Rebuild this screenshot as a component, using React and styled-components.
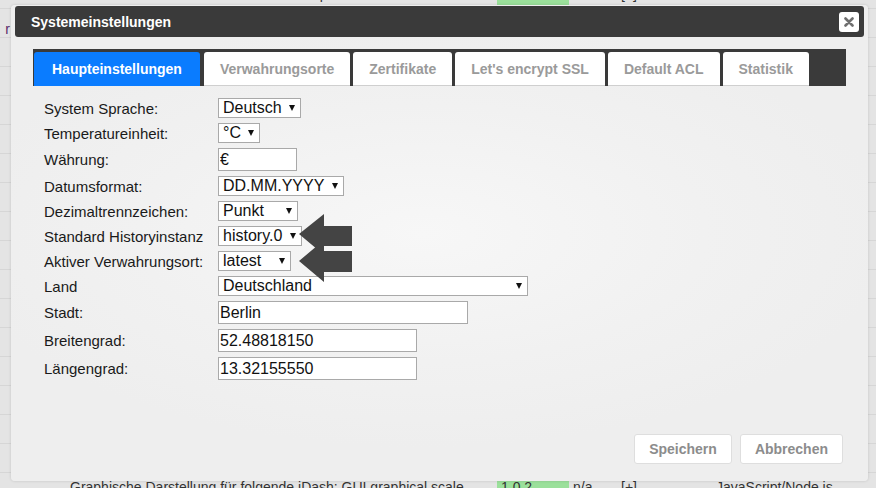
import React from "react";
import styled, { createGlobalStyle } from "styled-components";

const GlobalStyle = createGlobalStyle`
  html, body {
    margin: 0;
    padding: 0;
  }
  body {
    font-family: "Liberation Sans", Arial, sans-serif;
    background: #e4e4e4;
  }
`;

const tabs = [
  "Haupteinstellungen",
  "Verwahrungsorte",
  "Zertifikate",
  "Let's encrypt SSL",
  "Default ACL",
  "Statistik",
];

const fields = [
  { label: "System Sprache:", type: "select", value: "Deutsch", width: 83 },
  { label: "Temperatureinheit:", type: "select", value: "°C", width: 42 },
  { label: "Währung:", type: "input", value: "€", width: 79 },
  { label: "Datumsformat:", type: "select", value: "DD.MM.YYYY", width: 126 },
  { label: "Dezimaltrennzeichen:", type: "select", value: "Punkt", width: 80 },
  { label: "Standard Historyinstanz", type: "select", value: "history.0", width: 84 },
  { label: "Aktiver Verwahrungsort:", type: "select", value: "latest", width: 73 },
  { label: "Land", type: "select", value: "Deutschland", width: 310 },
  { label: "Stadt:", type: "input", value: "Berlin", width: 250 },
  { label: "Breitengrad:", type: "input", value: "52.48818150", width: 199 },
  { label: "Längengrad:", type: "input", value: "13.32155550", width: 199 },
];

// rows of the adapter page lying behind the dialog
const backRows = Array.from({ length: 18 }, (_, i) => i);
const edgeRow = (i) => i === 0 || i === 17;

function App() {
  return (
    <Page>
      <GlobalStyle />
      <BackTable>
        {backRows.map((i) => (
          <BackRow key={i}>
            <BackCell $align="right" $color="#5b2a6b">
              {i === 1 ? "r" : ""}
            </BackCell>
            <BackCell />
            <BackCell>
              {i === 0
                ? "Datenbank oder iobroker Server mit Adapter-Instanzen"
                : i === 17
                ? "Graphische Darstellung für folgende iDash: GUI graphical scale"
                : ""}
            </BackCell>
            <BackCell $green={edgeRow(i)}>{edgeRow(i) ? "1.0.2" : ""}</BackCell>
            <BackCell>{edgeRow(i) ? "n/a" : ""}</BackCell>
            <BackCell>{edgeRow(i) ? "[+]" : ""}</BackCell>
            <BackCell />
            <BackCell $color={i === 0 ? "#8b1b2b" : "#333"}>
              {i === 0 ? "Mod-Datenbank.io" : i === 17 ? "JavaScript/Node.js" : ""}
            </BackCell>
          </BackRow>
        ))}
      </BackTable>

      <Dialog>
        <TitleBar>
          <Title>Systemeinstellungen</Title>
          <CloseButton aria-label="Schließen">
            <svg width="10" height="10" viewBox="0 0 10 10">
              <path
                d="M1.5 1.5 L8.5 8.5 M8.5 1.5 L1.5 8.5"
                stroke="#6f6f6f"
                strokeWidth="2.6"
                strokeLinecap="round"
              />
            </svg>
          </CloseButton>
        </TitleBar>

        <Content>
          <TabBar>
            {tabs.map((t, i) => (
              <Tab key={t} $active={i === 0}>
                {t}
              </Tab>
            ))}
          </TabBar>

          <Form>
            {fields.map((f) => (
              <Row key={f.label}>
                <Label>{f.label}</Label>
                {f.type === "select" ? (
                  <SelectWrap $width={f.width}>
                    <Select defaultValue={f.value}>
                      <option>{f.value}</option>
                    </Select>
                  </SelectWrap>
                ) : (
                  <TextInput $width={f.width} defaultValue={f.value} />
                )}
              </Row>
            ))}

            <Arrows width="56" height="74" viewBox="0 0 56 74">
              <polygon
                points="1,22 26,2 26,14 54,14 54,34 26,34 26,43"
                fill="#444"
              />
              <polygon
                points="1,49 26,28 26,39 54,39 54,60 26,60 26,70"
                fill="#444"
              />
            </Arrows>
          </Form>
        </Content>

        <Footer>
          <FooterButton>Speichern</FooterButton>
          <FooterButton>Abbrechen</FooterButton>
        </Footer>
      </Dialog>
    </Page>
  );
}

const Page = styled.div`
  position: relative;
  width: 876px;
  height: 488px;
  overflow: hidden;
  background: #e4e4e4;
  font-family: "Liberation Sans", Arial, sans-serif;
`;

const BackTable = styled.div`
  display: flex;
  flex-direction: column;
  margin-top: -20px;
`;

const BackRow = styled.div`
  display: grid;
  grid-template-columns: 11px 55px 431px 72px 48px 40px 55px 1fr;
  height: 28px;
  align-items: center;
  border-bottom: 1px solid #d6d6d6;
  font-size: 14px;
  color: #333;
`;

const BackCell = styled.div`
  height: 100%;
  display: flex;
  align-items: ${(p) => (p.$align === "right" ? "flex-end" : "center")};
  justify-content: ${(p) => (p.$align === "right" ? "flex-end" : "flex-start")};
  padding: 0 ${(p) => (p.$align === "right" ? "1px" : "4px")};
  white-space: nowrap;
  overflow: hidden;
  color: ${(p) => p.$color || "#333"};
  background: ${(p) => (p.$green ? "#9be09b" : "transparent")};
`;

const Dialog = styled.div`
  position: absolute;
  left: 11px;
  top: 5px;
  width: 857px;
  height: 476px;
  box-sizing: border-box;
  padding: 1px 4px 0;
  display: flex;
  flex-direction: column;
  border-radius: 4px;
  background: radial-gradient(
    ellipse 55% 45% at 48% 48%,
    #f7f7f7 0%,
    #f1f1f1 60%,
    #eeeeee 100%
  );
  box-shadow: 0 0 3px rgba(0, 0, 0, 0.15);
`;

const TitleBar = styled.div`
  height: 31px;
  display: flex;
  align-items: center;
  justify-content: space-between;
  padding: 0 5px 0 16px;
  background: #3a3a3a;
  border-radius: 3px;
`;

const Title = styled.span`
  color: #fff;
  font-size: 14px;
  font-weight: bold;
`;

const CloseButton = styled.button`
  width: 20px;
  height: 20px;
  padding: 0;
  border: none;
  border-radius: 3px;
  background: #fff;
  display: flex;
  align-items: center;
  justify-content: center;
  cursor: pointer;
`;

const Content = styled.div`
  padding: 12px 18px 0;
`;

const TabBar = styled.div`
  height: 37px;
  box-sizing: border-box;
  padding: 3px 0 0 1px;
  display: flex;
  gap: 3px;
  background: #3a3a3a;
`;

const Tab = styled.div`
  height: 34px;
  box-sizing: border-box;
  padding: 0 ${(p) => (p.$active ? "18px" : "16px")};
  margin-right: ${(p) => (p.$active ? "1px" : "0")};
  display: flex;
  align-items: center;
  border-radius: 3px 3px 0 0;
  font-size: 14px;
  font-weight: bold;
  color: ${(p) => (p.$active ? "#fff" : "#9a9a9a")};
  background: ${(p) => (p.$active ? "#0a7cff" : "#fff")};
  border-bottom: 1px solid ${(p) => (p.$active ? "#0a7cff" : "#cfcfcf")};
`;

const Form = styled.div`
  position: relative;
  padding: 12px 0 0 11px;
`;

const Row = styled.div`
  display: flex;
  align-items: center;
  margin-bottom: 5px;
`;

const Label = styled.span`
  width: 174px;
  flex-shrink: 0;
  font-size: 15px;
  line-height: 17px;
  color: #1a1a1a;
  white-space: nowrap;
`;

const SelectWrap = styled.span`
  position: relative;
  display: inline-block;
  width: ${(p) => p.$width}px;
  height: 20px;

  &::after {
    content: "";
    position: absolute;
    right: 6px;
    top: 7px;
    border-left: 3.5px solid transparent;
    border-right: 3.5px solid transparent;
    border-top: 6px solid #111;
    pointer-events: none;
  }
`;

const Select = styled.select`
  appearance: none;
  -webkit-appearance: none;
  width: 100%;
  height: 20px;
  box-sizing: border-box;
  margin: 0;
  padding: 0 0 0 4px;
  border: 1px solid #a9a9a9;
  border-radius: 0;
  background: #fff;
  font-family: "Liberation Sans", Arial, sans-serif;
  font-size: 16px;
  line-height: 18px;
  color: #111;
  outline: none;
`;

const TextInput = styled.input`
  width: ${(p) => p.$width}px;
  height: 23px;
  box-sizing: border-box;
  margin: 0;
  padding: 0 1px;
  border: 1px solid #a9a9a9;
  background: #fff;
  font-family: "Liberation Sans", Arial, sans-serif;
  font-size: 16px;
  color: #111;
  outline: none;
`;

const Arrows = styled.svg`
  position: absolute;
  left: 265px;
  top: 126px;
`;

const Footer = styled.div`
  margin-top: auto;
  display: flex;
  justify-content: flex-end;
  gap: 8px;
  padding: 0 21px 17px;
`;

const FooterButton = styled.button`
  height: 30px;
  padding: 0 14px;
  background: #fff;
  border: 1px solid #dedede;
  border-radius: 3px;
  font-family: "Liberation Sans", Arial, sans-serif;
  font-size: 14px;
  font-weight: bold;
  color: #8c8c8c;
  cursor: pointer;
`;

export default App;
